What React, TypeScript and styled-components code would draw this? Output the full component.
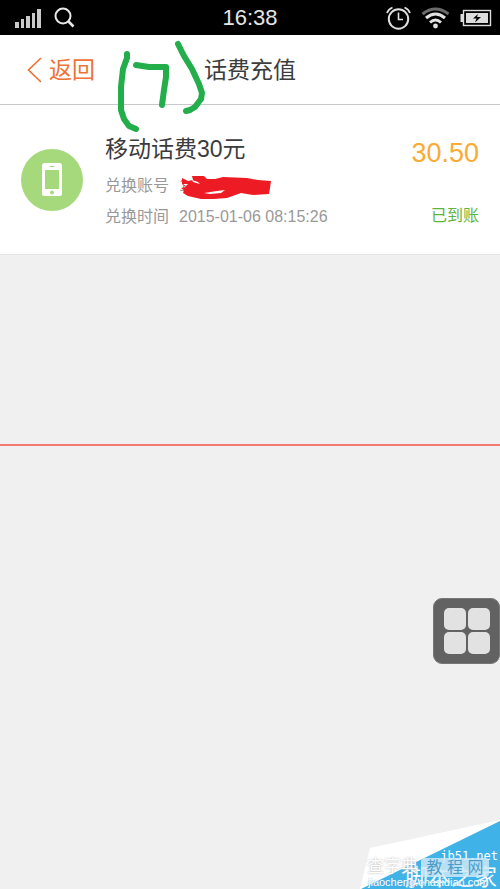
import React from "react";
import styled, { createGlobalStyle } from "styled-components";

const GlobalStyle = createGlobalStyle`
  *, *::before, *::after { box-sizing: border-box; }
  body {
    margin: 0;
    background: #f0f0f0;
    font-family: "Liberation Sans", "Noto Sans CJK SC", sans-serif;
  }
  h1, h2, p, dl, dd, dt { margin: 0; font-weight: 400; }
`;

const Page = styled.div`
  position: relative;
  display: flex;
  flex-direction: column;
  min-height: 100vh;
  overflow: hidden;
  background: #f0f0f0;
`;

const StatusBar = styled.div`
  display: grid;
  grid-template-columns: 1fr auto 1fr;
  align-items: center;
  height: 35px;
  padding: 0 8px;
  background: #000;
  color: #e4e4e4;
`;

const StatusGroup = styled.div<{ $end?: boolean }>`
  display: flex;
  align-items: center;
  justify-content: ${(p) => (p.$end ? "flex-end" : "flex-start")};
  gap: ${(p) => (p.$end ? "10px" : "12px")};
  padding-left: ${(p) => (p.$end ? "0" : "7px")};
`;

const Clock = styled.time`
  font-size: 22px;
  line-height: 35px;
`;

const Header = styled.header`
  position: relative;
  display: grid;
  grid-template-columns: 1fr auto 1fr;
  align-items: center;
  height: 70px;
  padding: 0 26px;
  background: #fff;
  border-bottom: 1px solid #c9c9c9;
`;

const BackButton = styled.button`
  display: flex;
  align-items: center;
  justify-self: start;
  gap: 6px;
  padding: 0;
  border: 0;
  background: none;
  color: #ee7336;
  font: inherit;
  font-size: 23px;
  line-height: 32px;
  cursor: pointer;
`;

const Title = styled.h1`
  color: #3c3c3c;
  font-size: 23px;
  line-height: 32px;
`;

const HandNote = styled.svg`
  position: absolute;
  top: 5px;
  left: 110px;
  z-index: 1;
  pointer-events: none;
`;

const RecordCard = styled.article`
  display: flex;
  align-items: center;
  height: 150px;
  padding: 0 21px;
  background: #fff;
  border-bottom: 1px solid #e6e6e6;
`;

const Badge = styled.div`
  display: flex;
  align-items: center;
  justify-content: center;
  flex: none;
  width: 62px;
  height: 62px;
  border-radius: 50%;
  background: #a5d97b;
`;

const Details = styled.div`
  flex: 1;
  height: 102px;
  margin-left: 22px;
`;

const RecordTitle = styled.h2`
  color: #3c3c3c;
  font-size: 23px;
  line-height: 41px;
`;

const Fields = styled.dl`
  display: grid;
  grid-template-columns: auto 1fr;
  column-gap: 10px;
  color: #999;
  font-size: 16px;
  line-height: 31px;
  white-space: nowrap;
`;

const Label = styled.dt``;

const Value = styled.dd`
  position: relative;
`;

const Redaction = styled.svg`
  position: absolute;
  top: 4px;
  left: 0;
`;

const Summary = styled.div`
  display: flex;
  flex-direction: column;
  justify-content: space-between;
  align-items: flex-end;
  height: 102px;
`;

const Amount = styled.p`
  color: #f9ab35;
  font-size: 27px;
  line-height: 48px;
`;

const State = styled.p`
  color: #5fb53c;
  font-size: 16px;
  line-height: 31px;
`;

const Content = styled.main`
  flex: 1;
  padding-top: 189px;
`;

const Divider = styled.hr`
  height: 2px;
  margin: 0;
  border: 0;
  background: #f37971;
`;

const FloatingButton = styled.button`
  position: absolute;
  right: 0;
  bottom: 225px;
  display: grid;
  grid-template-columns: 22px 22px;
  grid-auto-rows: 22px;
  place-content: center;
  gap: 2px;
  width: 67px;
  height: 66px;
  padding: 0;
  border: 1px solid #777;
  border-radius: 9px;
  background: #626262;
  cursor: pointer;
`;

const Tile = styled.span`
  border-radius: 5px;
  background: #e2e2e2;
`;

const Watermark = styled.aside`
  position: absolute;
  right: 0;
  bottom: 0;
  width: 140px;
  height: 69px;
  color: #fff;
  white-space: nowrap;
`;

const WatermarkShape = styled.svg`
  position: absolute;
  inset: 0;
`;

const SiteAddress = styled.span`
  position: absolute;
  right: 2px;
  top: 28px;
  font: 12px/16px "DejaVu Sans Mono", monospace;
`;

const SiteName = styled.span`
  position: absolute;
  right: 3px;
  top: 42px;
  font-size: 23px;
  line-height: 30px;
`;

const Dictionary = styled.span`
  position: absolute;
  left: 7px;
  top: 37px;
  color: #fff;
  font-size: 17px;
  line-height: 20px;
  text-shadow: 0 0 2px #aaa;
`;

const Tutorial = styled.span`
  position: absolute;
  right: 11px;
  top: 38px;
  width: 68px;
  border-radius: 4px;
  background: rgba(205, 232, 247, 0.85);
  color: #4a9dcb;
  font-size: 16px;
  line-height: 19px;
  text-align: center;
`;

const Domain = styled.span`
  position: absolute;
  left: 8px;
  bottom: 0;
  font-size: 11px;
  line-height: 14px;
  text-shadow: 0 0 1px #4aa5d8;
`;

const SignalIcon = () => (
  <svg width="27" height="20" viewBox="0 0 27 20" fill="#c9c9c9" aria-hidden="true">
    <rect x="0" y="14" width="4" height="6" />
    <rect x="6" y="11" width="3" height="9" />
    <rect x="11" y="8" width="4" height="12" />
    <rect x="17" y="5" width="3" height="15" />
    <rect x="22" y="1" width="4" height="19" />
  </svg>
);

const SearchIcon = () => (
  <svg width="22" height="22" viewBox="0 0 22 22" fill="none" stroke="#e8e8e8" aria-hidden="true">
    <circle cx="9" cy="9" r="7.500" strokeWidth="2" />
    <path d="M14 14l5.500 5.500" strokeWidth="2.600" />
  </svg>
);

const AlarmIcon = () => (
  <svg width="25" height="24" viewBox="0 0 25 24" fill="none" stroke="#dedede" strokeWidth="2" aria-hidden="true">
    <circle cx="12.500" cy="13" r="9.700" />
    <path d="M12.500 6.500V13.500H17" strokeWidth="1.600" />
    <path d="M1 7Q2.500 3 6.500 1.500M24 7Q22.500 3 18.500 1.500" strokeWidth="1.800" />
  </svg>
);

const WifiIcon = () => (
  <svg width="29" height="22" viewBox="0 0 29 22" fill="none" strokeWidth="3" aria-hidden="true">
    <path d="M1.500 7Q14.500 -3 27.500 7" stroke="#6b6b6b" />
    <path d="M5 11Q14.500 3 24 11M9 15.500Q14.500 10.500 20 15.500" stroke="#e2e2e2" />
    <circle cx="14.500" cy="19" r="2.400" fill="#e2e2e2" />
  </svg>
);

const BatteryIcon = () => (
  <svg width="32" height="18" viewBox="0 0 32 18" aria-hidden="true">
    <rect x="0.500" y="5" width="3" height="8" fill="#ddd" />
    <rect x="3.500" y="1.500" width="27" height="15" fill="none" stroke="#ddd" strokeWidth="1.400" />
    <rect x="6" y="4" width="22" height="10" fill="#ddd" />
    <path d="M18 5l-5 4.500h3.500l-1.500 4 6-5.500h-4z" fill="#000" />
  </svg>
);

const BackIcon = () => (
  <svg width="17" height="28" viewBox="0 0 17 28" fill="none" stroke="#ee7336" strokeWidth="1.700" aria-hidden="true">
    <path d="M15 2L2.500 14L15 26" />
  </svg>
);

const PhoneIcon = () => (
  <svg width="20" height="33" viewBox="0 0 20 33" aria-hidden="true">
    <rect width="20" height="33" rx="2.500" fill="#fff" />
    <rect x="3" y="7" width="14" height="19" fill="#a5d97b" />
    <path d="M7.500 3.500h5" stroke="#a5d97b" />
    <circle cx="10" cy="29.500" r="1.900" fill="#a5d97b" />
  </svg>
);

export default function App() {
  return (
    <>
      <GlobalStyle />
      <Page>
        <StatusBar>
          <StatusGroup>
            <SignalIcon />
            <SearchIcon />
          </StatusGroup>
          <Clock>16:38</Clock>
          <StatusGroup $end>
            <AlarmIcon />
            <WifiIcon />
            <BatteryIcon />
          </StatusGroup>
        </StatusBar>

        <Header>
          <BackButton type="button">
            <BackIcon />
            返回
          </BackButton>
          <Title>话费充值</Title>
          <HandNote
            width="100"
            height="95"
            viewBox="110 40 100 95"
            fill="none"
            stroke="#23ae4b"
            strokeWidth="6"
            strokeLinejoin="round"
            strokeLinecap="round"
            aria-hidden="true"
          >
            <path d="M127 54V58L123 69L121 87V110L124 119L129 126L136 129" />
            <path d="M136 65L149 67L166 67V77L164 90L162 105" />
            <path d="M178 44L184 56L192 69L199 84L202 93L201 99L195 107L190 110L186 111" />
          </HandNote>
        </Header>

        <RecordCard>
          <Badge>
            <PhoneIcon />
          </Badge>
          <Details>
            <RecordTitle>移动话费30元</RecordTitle>
            <Fields>
              <Label>兑换账号</Label>
              <Value>
                1
                <Redaction width="94" height="26" viewBox="178 174 94 26" aria-hidden="true">
                  <path
                    d="M181 178L187 181L192 180L191 176L203 176L206 179L214 179L222 177L246 178L257 180L270 181L269 188L268 194L252 195L240 193L226 198L213 199L200 199L187 196L182 193L183 190L180 188L185 187L181 184Z"
                    fill="#ed1c24"
                  />
                  <path d="M203 193L216 191L224 190L220 193L209 194ZM191 180L197 182L199 184L192 182ZM182 184L187 184L185 186Z" fill="#fff" />
                </Redaction>
              </Value>
              <Label>兑换时间</Label>
              <Value>2015-01-06 08:15:26</Value>
            </Fields>
          </Details>
          <Summary>
            <Amount>30.50</Amount>
            <State>已到账</State>
          </Summary>
        </RecordCard>

        <Content>
          <Divider />
        </Content>

        <FloatingButton type="button" aria-label="菜单">
          <Tile />
          <Tile />
          <Tile />
          <Tile />
        </FloatingButton>

        <Watermark>
          <WatermarkShape width="140" height="69" viewBox="0 0 140 69" aria-hidden="true">
            <path d="M0 69L10 28L140 0V69Z" fill="#fff" />
            <path d="M1 69L140 1V69Z" fill="#3fb3e8" />
          </WatermarkShape>
          <SiteAddress>jb51.net</SiteAddress>
          <SiteName>脚本之家</SiteName>
          <Dictionary>查字典</Dictionary>
          <Tutorial>教 程 网</Tutorial>
          <Domain>jiaocheng.chazidian.com</Domain>
        </Watermark>
      </Page>
    </>
  );
}
